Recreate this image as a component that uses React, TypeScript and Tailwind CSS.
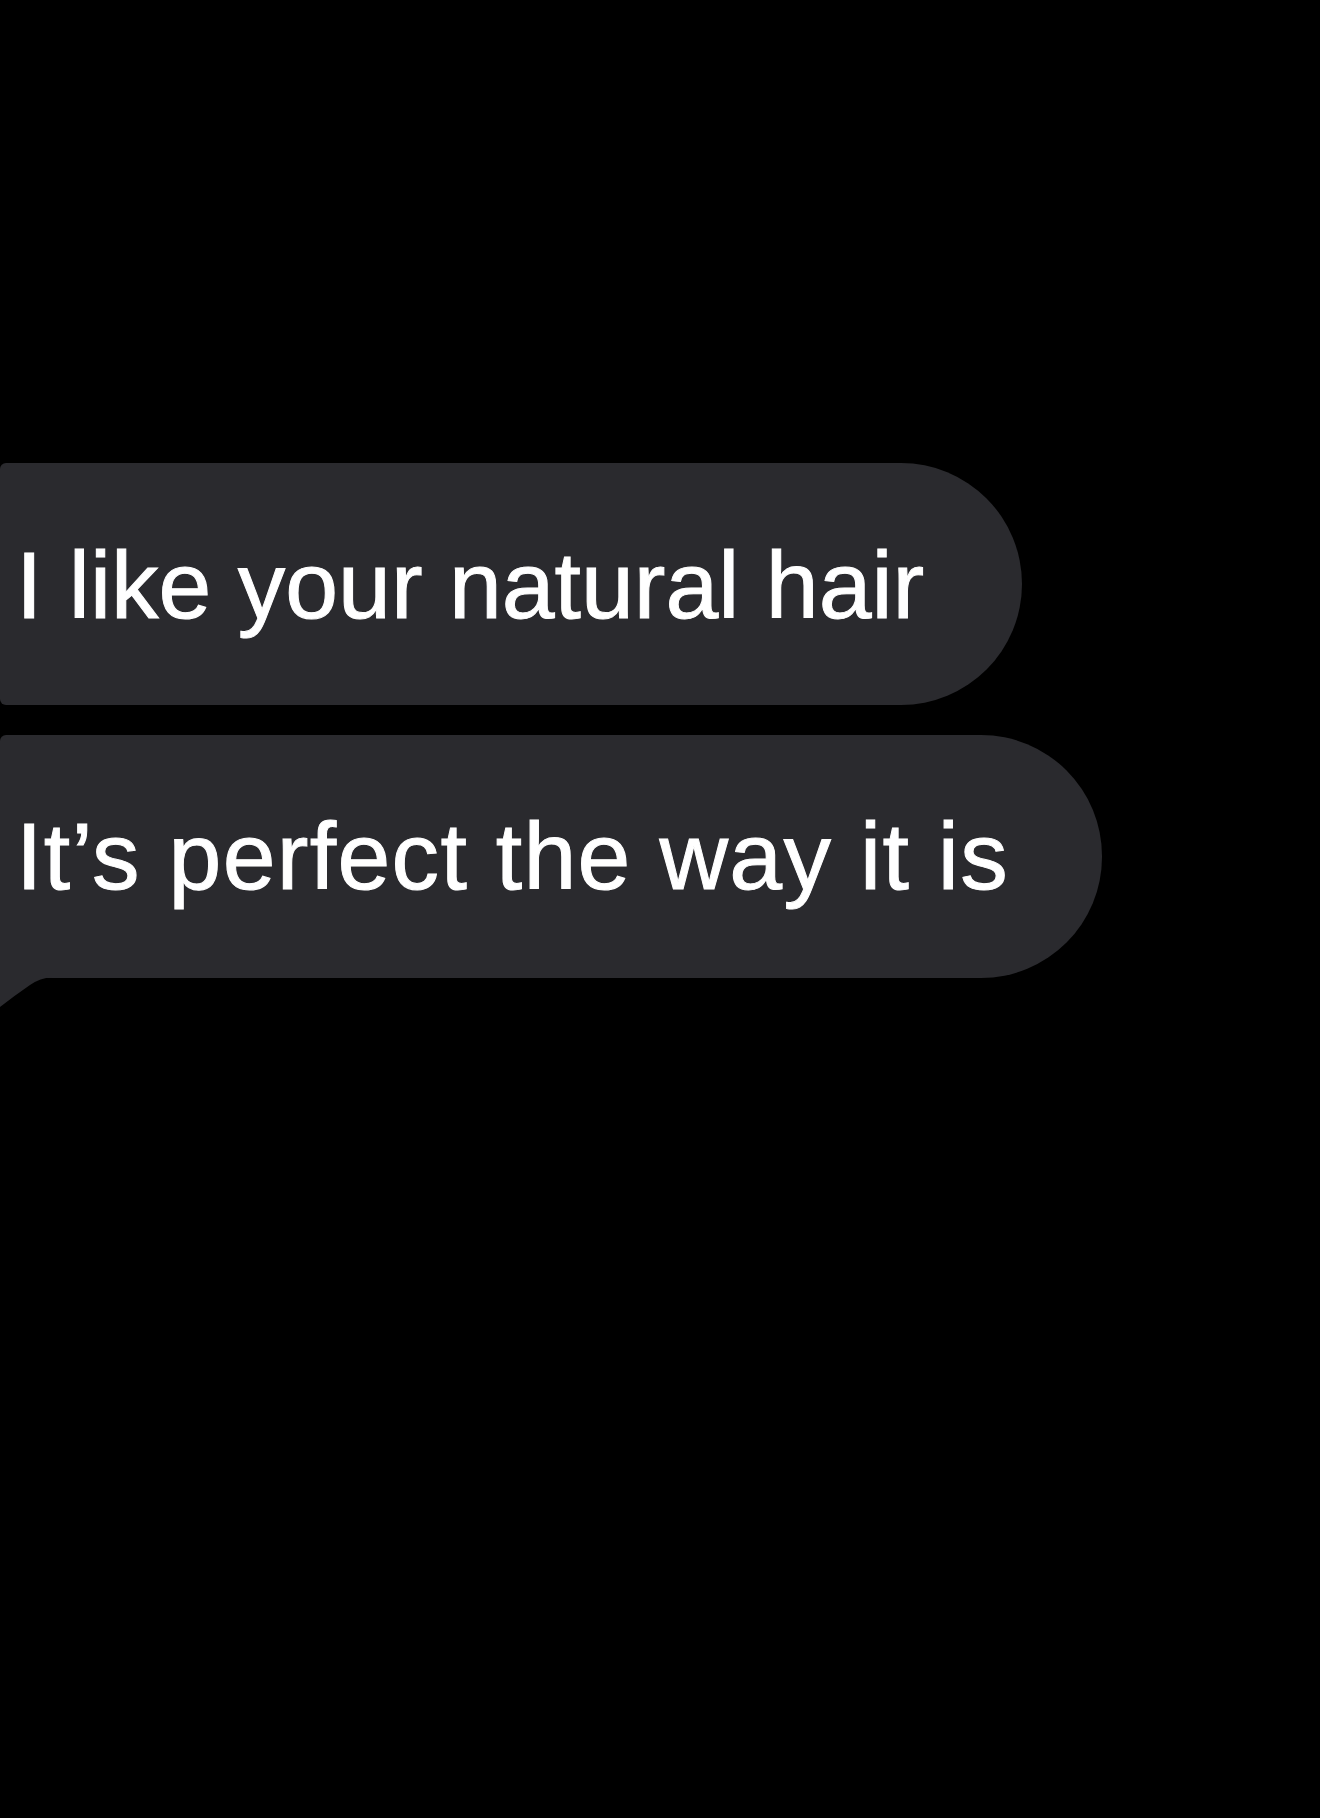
import React from "react";

export default function App() {
  return (
    <div className="min-h-[1818px] w-[1320px] bg-black overflow-hidden">
      <div className="flex flex-col items-start pt-[463px] gap-[30px] font-['Liberation_Sans',Arial,sans-serif] text-white">
        <div className="flex h-[242px] w-[1022px] items-center rounded-l-[6px] rounded-r-[121px] bg-[#2a2a2e] pl-[16px] pt-[2px]">
          <span className="text-[95px] leading-none whitespace-nowrap [-webkit-text-stroke:1px_#ffffff]">I like your natural hair</span>
        </div>
        <div className="relative flex h-[243px] w-[1102px] items-center rounded-tl-[6px] rounded-bl-none rounded-r-[121px] bg-[#2a2a2e] pl-[16px]">
          <span className="text-[95px] leading-none tracking-[1.3px] whitespace-nowrap [-webkit-text-stroke:1px_#ffffff]">It’s perfect the way it is</span>
          <svg className="absolute left-0 top-[242px]" width="60" height="32" viewBox="0 0 60 32">
            <path d="M0 0 H52 Q40 1 30 8 Q14 19 0 30 Z" fill="#2a2a2e" />
          </svg>
        </div>
      </div>
    </div>
  );
}
